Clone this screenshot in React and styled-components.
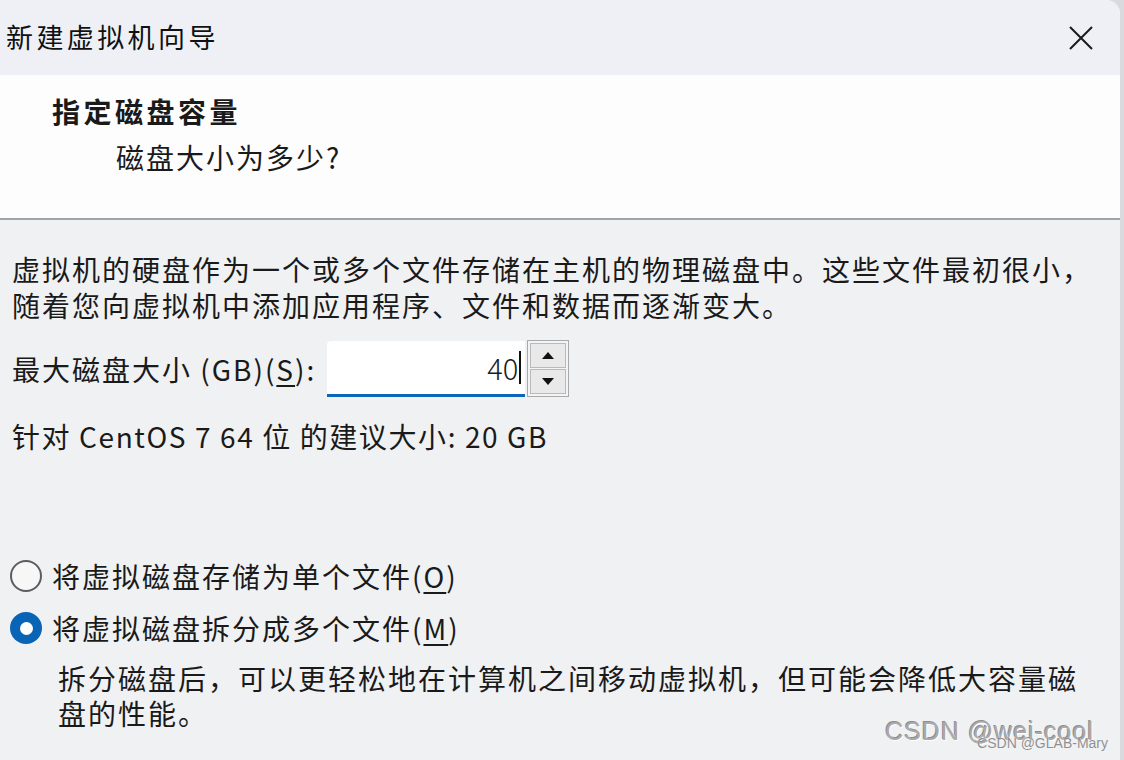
import React, { useState } from 'react';
import styled, { createGlobalStyle } from 'styled-components';

const GlobalStyle = createGlobalStyle`
  html, body {
    margin: 0;
    padding: 0;
    background: #d9dadd;
  }
  body {
    font-family: "Noto Sans CJK SC", "Noto Sans", sans-serif;
    color: #1a1a1a;
  }
`;

const Window = styled.div`
  position: relative;
  width: 1120px;
  height: 760px;
  display: flex;
  flex-direction: column;
  background: #f0f1f3;
  border-top-right-radius: 14px;
  overflow: hidden;
`;

const TitleBar = styled.div`
  height: 75px;
  display: flex;
  align-items: center;
  justify-content: space-between;
  background: #eef0f6;
  padding: 0 0 0 6px;
`;

const TitleText = styled.div`
  font-size: 27px;
  letter-spacing: 3.4px;
  color: #111;
  padding-bottom: 2px;
`;

const CloseButton = styled.button`
  width: 70px;
  height: 75px;
  border: 0;
  background: transparent;
  display: flex;
  align-items: center;
  justify-content: center;
  padding: 0;
  margin-right: 4px;
`;

const Header = styled.div`
  height: 145px;
  background: #fdfdfe;
  border-bottom: 2px solid #a3a4a7;
  box-sizing: border-box;
  padding: 16px 0 0 52px;
`;

const HeaderTitle = styled.div`
  font-size: 28px;
  font-weight: 700;
  letter-spacing: 3.5px;
  line-height: 40px;
`;

const HeaderSub = styled.div`
  font-size: 28px;
  letter-spacing: 2px;
  line-height: 40px;
  margin: 6px 0 0 64px;
`;

const Body = styled.div`
  flex: 1;
  padding: 31px 0 0 12px;
  font-size: 28px;
  letter-spacing: 2px;
  line-height: 36px;
`;

const Paragraph = styled.p`
  margin: 0;
`;

const SizeRow = styled.div`
  display: flex;
  align-items: center;
  margin-top: 17px;
  height: 57px;
`;

const Label = styled.span`
  margin-right: 11px;
`;

const Mnemonic = styled.span`
  text-decoration: underline;
  text-underline-offset: 4px;
  text-decoration-thickness: 2px;
`;

const NumberBox = styled.div`
  width: 198px;
  height: 56px;
  box-sizing: border-box;
  background: #ffffff;
  border-top-left-radius: 4px;
  border-bottom: 3px solid #0b66b8;
  display: flex;
  align-items: center;
  justify-content: flex-end;
  padding-right: 4px;
  font-size: 29px;
  font-weight: 300;
  letter-spacing: 0;
`;

const Caret = styled.span`
  display: inline-block;
  width: 2px;
  height: 33px;
  background: #111;
  margin-left: 1px;
`;

const Spinner = styled.div`
  width: 42px;
  height: 57px;
  margin-left: 2px;
  box-sizing: border-box;
  border: 1px solid #a8a9ab;
  background: #f4f4f4;
  display: flex;
  flex-direction: column;
  padding: 2px;
  gap: 1px;
`;

const SpinButton = styled.div`
  flex: 1;
  border: 1px solid #b9babc;
  background: #e9e9ea;
  display: flex;
  align-items: center;
  justify-content: center;
`;

const Recommend = styled.div`
  margin-top: 21px;
  letter-spacing: 1.6px;
`;

const RadioGroup = styled.div`
  margin-top: 104px;
  margin-left: -2px;
  display: flex;
  flex-direction: column;
  gap: 16px;
`;

const RadioRow = styled.label`
  display: flex;
  align-items: center;
  gap: 10px;
  cursor: default;
`;

const RadioDot = styled.span`
  width: 32px;
  height: 32px;
  box-sizing: border-box;
  border-radius: 50%;
  flex-shrink: 0;
  display: flex;
  align-items: center;
  justify-content: center;
  background: ${p => (p.checked ? '#0a64b6' : '#f7f7f8')};
  border: ${p => (p.checked ? 'none' : '2px solid #5c5d60')};
  &::after {
    content: '';
    display: ${p => (p.checked ? 'block' : 'none')};
    width: 13px;
    height: 13px;
    border-radius: 50%;
    background: #ffffff;
  }
`;

const Description = styled.p`
  margin: 15px 0 0 46px;
  width: 1060px;
  line-height: 35px;
`;

const Watermark = styled.div`
  position: absolute;
  right: 26px;
  bottom: 14px;
  font-family: "Liberation Sans", Arial, sans-serif;
  font-size: 25px;
  letter-spacing: 1px;
  color: #a9aaac;
  text-shadow: 1px 1px 0 #ffffff, -1px -1px 0 #8d8e90;
`;

const SubWatermark = styled.div`
  position: absolute;
  right: 12px;
  bottom: 9px;
  font-family: "Liberation Sans", Arial, sans-serif;
  font-size: 14px;
  color: #8e8f92;
  text-shadow: 0 0 1px #ffffff;
`;

const Triangle = ({ up }) => (
  <svg width="14" height="9" viewBox="0 0 14 9">
    <path d={up ? 'M1 8 L7 1 L13 8 Z' : 'M1 1 L7 8 L13 1 Z'} fill="#111" />
  </svg>
);

const App = () => {
  const [split, setSplit] = useState(true);

  return (
    <>
      <GlobalStyle />
      <Window>
        <TitleBar>
          <TitleText>新建虚拟机向导</TitleText>
          <CloseButton aria-label="关闭">
            <svg width="26" height="26" viewBox="0 0 26 26">
              <path d="M2 2 L24 24 M24 2 L2 24" stroke="#1a1a1a" strokeWidth="2" />
            </svg>
          </CloseButton>
        </TitleBar>
        <Header>
          <HeaderTitle>指定磁盘容量</HeaderTitle>
          <HeaderSub>磁盘大小为多少?</HeaderSub>
        </Header>
        <Body>
          <Paragraph>
            虚拟机的硬盘作为一个或多个文件存储在主机的物理磁盘中。这些文件最初很小，
            <br />
            随着您向虚拟机中添加应用程序、文件和数据而逐渐变大。
          </Paragraph>
          <SizeRow>
            <Label>
              最大磁盘大小 (GB)(<Mnemonic>S</Mnemonic>):
            </Label>
            <NumberBox>
              40<Caret />
            </NumberBox>
            <Spinner>
              <SpinButton><Triangle up /></SpinButton>
              <SpinButton><Triangle /></SpinButton>
            </Spinner>
          </SizeRow>
          <Recommend>针对 CentOS 7 64 位 的建议大小: 20 GB</Recommend>
          <RadioGroup>
            <RadioRow onClick={() => setSplit(false)}>
              <RadioDot checked={!split} />
              <span>将虚拟磁盘存储为单个文件(<Mnemonic>O</Mnemonic>)</span>
            </RadioRow>
            <RadioRow onClick={() => setSplit(true)}>
              <RadioDot checked={split} />
              <span>将虚拟磁盘拆分成多个文件(<Mnemonic>M</Mnemonic>)</span>
            </RadioRow>
          </RadioGroup>
          <Description>
            拆分磁盘后，可以更轻松地在计算机之间移动虚拟机，但可能会降低大容量磁
            <br />
            盘的性能。
          </Description>
        </Body>
        <Watermark>CSDN @wei-cool</Watermark>
        <SubWatermark>CSDN @GLAB-Mary</SubWatermark>
      </Window>
    </>
  );
};

export default App;
